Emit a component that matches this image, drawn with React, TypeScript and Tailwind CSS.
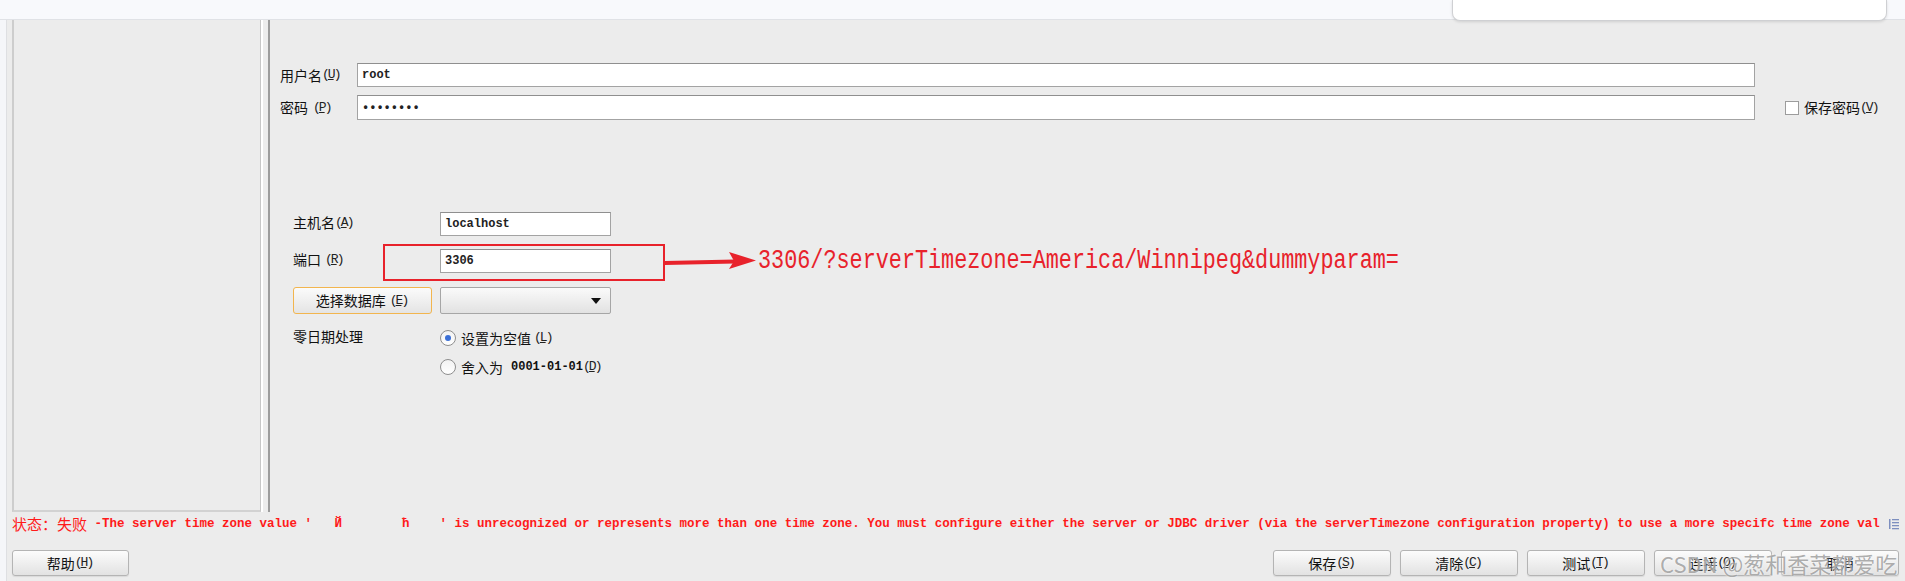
import React from "react";

const cjk = "font-['Noto_Sans_CJK_SC','Noto_Sans',sans-serif]";
const mono = "font-['Liberation_Mono','Noto_Sans_CJK_SC',monospace]";

function Key({ k }: { k: string }) {
  return (
    <span className={`${mono} text-[13px] tracking-[-2px] text-[#222] pr-[2px]`}>
      (<span className="underline underline-offset-1">{k}</span>)
    </span>
  );
}

function Btn({ label, k, w = "w-[118px]" }: { label: string; k: string; w?: string }) {
  return (
    <div
      className={`${w} h-[26px] flex items-center justify-center rounded-[3px] border border-[#b4b4b4] bg-gradient-to-b from-[#fcfcfc] to-[#e2e2e2] shadow-[0_1px_1px_rgba(0,0,0,0.08)] ${cjk} text-[14px] text-[#111]`}
    >
      {label}
      {k && <Key k={k} />}
    </div>
  );
}

function TextInput({ value, w, h = "h-[24px]" }: { value: string; w: string; h?: string }) {
  return (
    <div
      className={`${w} ${h} bg-white border border-[#a3a3a3] border-t-[#8f8f8f] flex items-center px-[4px] ${mono} text-[12px] font-bold text-[#222]`}
    >
      {value}
    </div>
  );
}

export default function App() {
  return (
    <div className={`relative w-[1905px] h-[581px] overflow-hidden bg-[#ececec] flex flex-col ${cjk}`}>
      {/* top strip */}
      <div className="h-[20px] shrink-0 bg-[#f8f9fc] border-b border-[#e0e2e6]" />

      <div className="flex flex-1">
        <div className="w-[7px] shrink-0 bg-[#f5f6f9] border-r border-[#dedfe2]" />
        <div className="flex-1 flex flex-col pl-[5px]">
          {/* main row */}
          <div className="flex h-[492px]">
            <div className="w-[249px] border-l-2 border-l-[#cdcdcd] border-r border-r-[#c6c6c6] border-b-2 border-b-[#d2d2d2] bg-[#ececec]" />
            <div className="w-[2px] bg-white" />
            <div className="w-[5px]" />
            <div className="w-[2px] bg-[#9c9c9c]" />

            {/* form */}
            <div className="flex-1 flex flex-col pl-[10px] pt-[43px]">
              <div className="flex items-center h-[24px]">
                <div className="w-[77px] text-[14px] text-[#111] flex items-center">
                  用户名<Key k="U" />
                </div>
                <TextInput value="root" w="w-[1398px]" />
              </div>
              <div className="flex items-center h-[25px] mt-[8px]">
                <div className="w-[77px] text-[14px] text-[#111] flex items-center">
                  密码<span className="w-[5px]" />
                  <Key k="P" />
                </div>
                <TextInput value="••••••••" w="w-[1398px]" h="h-[25px]" />
                <div className="ml-[30px] flex items-center gap-[5px]">
                  <div className="w-[14px] h-[14px] bg-white border border-[#9c9c9c]" />
                  <span className="text-[14px] text-[#111] flex items-center">
                    保存密码<Key k="V" />
                  </span>
                </div>
              </div>

              {/* connection section */}
              <div className="ml-[13px] mt-[92px] flex flex-col">
                <div className="flex items-center h-[24px]">
                  <div className="w-[147px] text-[14px] text-[#111] flex items-center -mt-[3px]">
                    主机名<Key k="A" />
                  </div>
                  <TextInput value="localhost" w="w-[171px]" />
                </div>
                <div className="flex items-center h-[24px] mt-[13px]">
                  <div className="w-[147px] text-[14px] text-[#111] flex items-center -mt-[3px]">
                    端口<span className="w-[4px]" />
                    <Key k="R" />
                  </div>
                  <TextInput value="3306" w="w-[171px]" />
                </div>
                <div className="flex items-center h-[27px] mt-[14px]">
                  <div className="w-[139px] h-[27px] rounded-[3px] border border-[#f2b54e] bg-gradient-to-b from-[#fbfbfb] to-[#e4e4e4] flex items-center justify-center text-[14px] text-[#111]">
                    选择数据库<span className="w-[4px]" />
                    <Key k="E" />
                  </div>
                  <div className="ml-[8px] w-[171px] h-[27px] rounded-[2px] border border-[#a6a6a6] bg-gradient-to-b from-[#fafafa] to-[#e2e2e2] flex items-center justify-end pr-[9px]">
                    <svg width="10" height="6" viewBox="0 0 10 6">
                      <polygon points="0,0 10,0 5,6" fill="#111" />
                    </svg>
                  </div>
                </div>
                <div className="flex mt-[16px]">
                  <div className="w-[147px] text-[14px] text-[#111] leading-[20px] -mt-[4px]">零日期处理</div>
                  <div className="flex flex-col gap-[13px]">
                    <div className="flex items-center h-[16px] gap-[5px]">
                      <div className="w-[16px] h-[16px] rounded-full border border-[#8e8e8e] bg-gradient-to-b from-[#f2f2f2] to-white flex items-center justify-center">
                        <div className="w-[6px] h-[6px] rounded-full bg-[#3b6fd6]" />
                      </div>
                      <span className="text-[14px] text-[#111] flex items-center">
                        设置为空值<span className="w-[3px]" />
                        <Key k="L" />
                      </span>
                    </div>
                    <div className="flex items-center h-[16px] gap-[5px]">
                      <div className="w-[16px] h-[16px] rounded-full border border-[#8e8e8e] bg-gradient-to-b from-[#f2f2f2] to-white" />
                      <span className="text-[14px] text-[#111] flex items-center">
                        舍入为
                        <span className={`${mono} text-[12px] font-bold ml-[8px]`}>0001-01-01</span>
                        <Key k="D" />
                      </span>
                    </div>
                  </div>
                </div>
              </div>
            </div>
          </div>

          {/* status line */}
          <div className="h-[24px] flex items-center text-[#ff1a1a] whitespace-pre">
            <span className="text-[15px] leading-[20px]">状态：失败</span>
            <span className={`${mono} text-[12.5px] leading-[20px] font-bold`}>
              {" -The server time zone value '   Й        ћ    ' is unrecognized or represents more than one time zone. You must configure either the server or JDBC driver (via the serverTimezone configuration property) to use a more specifc time zone val"}
            </span>
            <svg className="ml-auto mr-[6px]" width="10" height="12" viewBox="0 0 10 12">
              <rect x="0" y="1" width="1.5" height="10" fill="#7d8fbf" />
              <rect x="3" y="1" width="7" height="1.3" fill="#7d8fbf" />
              <rect x="3" y="4" width="7" height="1.3" fill="#7d8fbf" />
              <rect x="3" y="7" width="7" height="1.3" fill="#7d8fbf" />
              <rect x="3" y="10" width="7" height="1.3" fill="#7d8fbf" />
            </svg>
          </div>

          {/* buttons */}
          <div className="flex items-center mt-[14px] pr-[6px]">
            <Btn label="帮助" k="H" w="w-[117px]" />
            <div className="ml-auto flex gap-[9px]">
              <Btn label="保存" k="S" />
              <Btn label="清除" k="C" />
              <Btn label="测试" k="T" />
              <Btn label="连接" k="O" />
              <Btn label="取消" k="" />
            </div>
          </div>
        </div>
      </div>

      {/* popup overlay at top */}
      <div className="absolute left-[1452px] top-0 w-[435px] h-[21px] bg-white rounded-b-[8px] border border-t-0 border-[#cfd0d3] shadow-[0_1px_3px_rgba(0,0,0,0.12)]" />

      {/* annotation: red box, arrow, text */}
      <div className="absolute left-[383px] top-[244px] w-[282px] h-[37px] border-2 border-[#e8222b]" />
      <svg className="absolute left-[663px] top-[249px]" width="95" height="24" viewBox="0 0 95 24">
        <polygon points="2,12 72,10.5 72,14.5 2,16" fill="#e8222b" />
        <polygon points="66,3 93,11.5 66,20 71,12" fill="#e8222b" />
      </svg>
      <div
        className={`absolute left-[758px] top-[251px] h-[22px] leading-[22px] text-[21.8px] text-[#e8222b] font-['Liberation_Mono',monospace] scale-y-[1.3] origin-center whitespace-pre`}
      >
        3306/?serverTimezone=America/Winnipeg&amp;dummyparam=
      </div>

      {/* watermark */}
      <div className="absolute left-[1660px] top-[548px] text-[22px] leading-[30px] text-[#8a8a8a]/70 whitespace-pre [text-shadow:0_0_2px_#fff]">
        CSDN @葱和香菜都爱吃
      </div>
    </div>
  );
}
